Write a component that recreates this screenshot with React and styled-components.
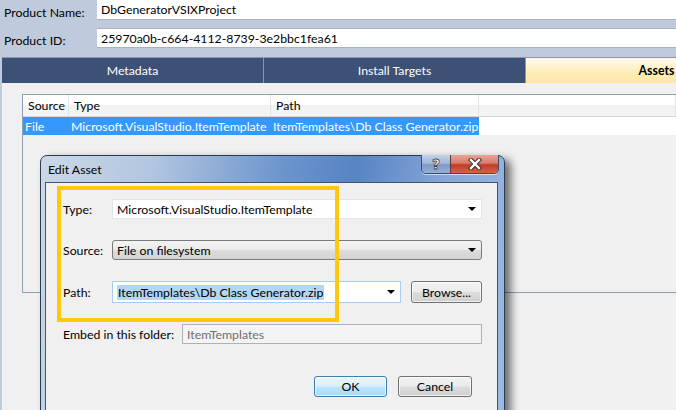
import React from "react";
import styled, { createGlobalStyle } from "styled-components";

const GlobalStyle = createGlobalStyle`
  html, body {
    margin: 0;
    padding: 0;
    background: #f0f0f0;
  }
  body {
    font-family: "Segoe UI", Lato, "Noto Sans", sans-serif;
    font-size: 12.3px;
  }
`;

const Screen = styled.div`
  position: relative;
  width: 676px;
  height: 410px;
  overflow: hidden;
  background: #f0f0f0;
  color: #000;
`;

const Header = styled.div`
  display: flex;
  flex-direction: column;
  background: #bfcbdc;
  height: 83px;
`;

const FieldRow = styled.div`
  display: flex;
  align-items: center;
  height: 20px;
  margin-top: ${(p) => p.$top || 0}px;
`;

const FieldLabel = styled.div`
  width: 93px;
  padding-left: 4px;
  padding-top: 4px;
`;

const FieldBox = styled.div`
  flex: 1;
  height: 100%;
  background: #fff;
  box-sizing: border-box;
  border-top: ${(p) => (p.$first ? "none" : "1px solid #a9b2bf")};
  border-bottom: 1px solid #a9b2bf;
  padding-left: 4px;
  display: flex;
  align-items: center;
`;

const TabBar = styled.div`
  display: flex;
  margin: 9px 0 0 2px;
  height: 26px;
  border-top: 1px solid #8b97a9;
  box-sizing: border-box;
  background: #3d5176;
`;

const Tab = styled.div`
  flex: none;
  width: 261px;
  display: flex;
  align-items: center;
  justify-content: center;
  border-right: 1px solid #8b97a9;
  color: ${(p) => (p.$active ? "#000" : "#fff")};
  font-weight: ${(p) => (p.$active ? 700 : 400)};
  background: ${(p) =>
    p.$active ? "linear-gradient(#fffaeb, #ffedb8 60%, #ffe7a4)" : "#3d5176"};
`;

const Content = styled.div`
  height: 327px;
  border-left: 2px solid #bfcbdc;
  padding: 11px 0 0 20px;
  box-sizing: border-box;
`;

const AssetList = styled.div`
  height: 199px;
  border: 1px solid #8e9eb6;
  border-right: none;
  box-sizing: border-box;
`;

const ListGrid = styled.div`
  display: grid;
  grid-template-columns: 46px 202px 208px 1fr;
`;

const HeadCell = styled.div`
  height: 21px;
  border-bottom: 1px solid #d5d5d5;
  border-right: 1px solid #e3e3e3;
  background: linear-gradient(#ffffff 0%, #ffffff 45%, #f1f2f4 50%, #f4f5f7 100%);
  display: flex;
  align-items: center;
  padding-left: 5px;
`;

const RowCell = styled.div`
  height: 18px;
  display: flex;
  align-items: center;
  padding-left: 2px;
  color: ${(p) => (p.$sel ? "#fff" : "#000")};
  background: ${(p) => (p.$sel ? "#3399ff" : "#fff")};
  white-space: nowrap;
  overflow: hidden;
`;

/* dialog floats over the asset list */
const Dialog = styled.div`
  position: absolute;
  left: 40px;
  top: 155px;
  width: 465px;
  height: 280px;
  box-sizing: border-box;
  border: 1px solid #2d3b50;
  border-radius: 7px 7px 0 0;
  background: linear-gradient(100deg, #cbd8e8 0%, #b2c6e0 22%, #6b94cc 48%, #5884c4 62%, #86a7d8 80%, #9fbbe2 100%);
  box-shadow: 6px 4px 9px rgba(0, 0, 0, 0.55);
  display: flex;
  flex-direction: column;
`;

const TitleBar = styled.div`
  position: relative;
  height: 26px;
  display: flex;
  align-items: center;
  padding-left: 7px;
  color: #000;
`;

const CaptionButtons = styled.div`
  position: absolute;
  top: -1px;
  right: 5px;
  display: flex;
  height: 18px;
  border: 1px solid #3c4a62;
  border-top: none;
  border-radius: 0 0 5px 5px;
  overflow: hidden;
  box-shadow: 0 1px 0 rgba(255, 255, 255, 0.6);
`;

const CaptionButton = styled.div`
  width: ${(p) => p.$w}px;
  display: flex;
  align-items: center;
  justify-content: center;
  background: ${(p) =>
    p.$close
      ? "linear-gradient(#e7a497 0%, #d77c6b 45%, #c23b26 55%, #d0654d 100%)"
      : "linear-gradient(#c2d3ea 0%, #9fb7d9 45%, #7d9ac4 55%, #93b0d8 100%)"};
  border-left: ${(p) => (p.$close ? "1px solid #5b3a3a" : "none")};
  font-weight: 700;
  font-size: 14px;
  color: #fff;
  -webkit-text-stroke: 0.8px #3b4452;
  font-family: "DejaVu Sans", sans-serif;
`;

const Client = styled.div`
  position: relative;
  flex: 1;
  margin: 0 6px 0 4px;
  border: 1px solid #44546c;
  border-bottom: none;
  background: #f0f0f0;
  padding: 16px 15px 0 17px;
  display: flex;
  flex-direction: column;
  gap: 21px;
`;

const Highlight = styled.div`
  position: absolute;
  left: 11px;
  top: 3px;
  width: 282px;
  height: 136px;
  box-sizing: border-box;
  border: 4px solid #ffc80c;
  pointer-events: none;
`;

const FormRow = styled.div`
  display: grid;
  grid-template-columns: ${(p) => p.$cols || "49px 1fr"};
  align-items: center;
  gap: ${(p) => p.$gap || 0}px;
  height: ${(p) => p.$h || 20}px;
`;

const Combo = styled.div`
  position: relative;
  height: ${(p) => p.$h || 20}px;
  box-sizing: border-box;
  display: flex;
  align-items: center;
  padding-left: 4px;
  border: 1px solid ${(p) => (p.$kind === "button" ? "#7a7a7a" : p.$kind === "focus" ? "#a8cdf0" : "#e1e4e8")};
  border-radius: ${(p) => (p.$kind === "button" ? 3 : 0)}px;
  background: ${(p) =>
    p.$kind === "button" ? "linear-gradient(#f3f3f3, #ebebeb 48%, #dddddd 52%, #d3d3d3)" : "#fff"};
`;

const Arrow = styled.span`
  position: absolute;
  right: 5px;
  top: 50%;
  margin-top: -2px;
  width: 0;
  height: 0;
  border-left: 4px solid transparent;
  border-right: 4px solid transparent;
  border-top: 4px solid #000;
`;

const Selected = styled.span`
  background: #b2d6f4;
  padding: 0 1px;
`;

const DisabledBox = styled.div`
  height: 20px;
  box-sizing: border-box;
  border: 1px solid #adb2b8;
  background: #f4f4f4;
  color: #6d6d6d;
  display: flex;
  align-items: center;
  padding-left: 4px;
`;

const PushButton = styled.div`
  width: ${(p) => p.$w}px;
  height: ${(p) => p.$h || 21}px;
  box-sizing: border-box;
  border: 1px solid ${(p) => (p.$def ? "#3c7fb1" : "#707070")};
  border-radius: 3px;
  background: ${(p) =>
    p.$def
      ? "linear-gradient(#eaf6fd, #d9f0fc 48%, #bee6fd 52%, #a7d9f5)"
      : "linear-gradient(#f2f2f2, #ebebeb 48%, #dddddd 52%, #cfcfcf)"};
  box-shadow: inset 0 0 0 1px rgba(255, 255, 255, 0.7);
  display: flex;
  align-items: center;
  justify-content: center;
`;

const ButtonRow = styled.div`
  display: flex;
  justify-content: flex-end;
  gap: 11px;
  margin-top: 11px;
  padding-right: 10px;
`;

const CloseIcon = () => (
  <svg width="14" height="12" viewBox="0 0 14 12">
    <path d="M3 2 L11 10 M11 2 L3 10" stroke="#3b3030" strokeWidth="4.4" strokeLinecap="square" />
    <path d="M3 2 L11 10 M11 2 L3 10" stroke="#fff" strokeWidth="2.4" strokeLinecap="square" />
  </svg>
);

export default function App() {
  return (
    <Screen>
      <GlobalStyle />
      <Header>
        <FieldRow>
          <FieldLabel>Product Name:</FieldLabel>
          <FieldBox $first>DbGeneratorVSIXProject</FieldBox>
        </FieldRow>
        <FieldRow $top={8}>
          <FieldLabel>Product ID:</FieldLabel>
          <FieldBox>25970a0b-c664-4112-8739-3e2bbc1fea61</FieldBox>
        </FieldRow>
        <TabBar>
          <Tab>Metadata</Tab>
          <Tab>Install Targets</Tab>
          <Tab $active>Assets</Tab>
        </TabBar>
      </Header>

      <Content>
        <AssetList>
          <ListGrid>
            <HeadCell>Source</HeadCell>
            <HeadCell>Type</HeadCell>
            <HeadCell>Path</HeadCell>
            <HeadCell />
            <RowCell $sel>File</RowCell>
            <RowCell $sel>Microsoft.VisualStudio.ItemTemplate</RowCell>
            <RowCell $sel>ItemTemplates\Db Class Generator.zip</RowCell>
            <RowCell />
          </ListGrid>
        </AssetList>
      </Content>

      <Dialog>
        <TitleBar>
          Edit Asset
          <CaptionButtons>
            <CaptionButton $w={28}>?</CaptionButton>
            <CaptionButton $w={47} $close>
              <CloseIcon />
            </CaptionButton>
          </CaptionButtons>
        </TitleBar>
        <Client>
          <FormRow>
            <span>Type:</span>
            <Combo>
              Microsoft.VisualStudio.ItemTemplate
              <Arrow />
            </Combo>
          </FormRow>
          <FormRow>
            <span>Source:</span>
            <Combo $kind="button">
              File on filesystem
              <Arrow />
            </Combo>
          </FormRow>
          <FormRow $cols="39px 289px 71px" $gap={10} $h={22}>
            <span>Path:</span>
            <Combo $kind="focus" $h={22}>
              <Selected>ItemTemplates\Db Class Generator.zip</Selected>
              <Arrow />
            </Combo>
            <PushButton $w={71} $h={22}>Browse...</PushButton>
          </FormRow>
          <FormRow $cols="119px 1fr">
            <span>Embed in this folder:</span>
            <DisabledBox>ItemTemplates</DisabledBox>
          </FormRow>
          <ButtonRow>
            <PushButton $w={73} $def>OK</PushButton>
            <PushButton $w={74}>Cancel</PushButton>
          </ButtonRow>
          <Highlight />
        </Client>
      </Dialog>
    </Screen>
  );
}
